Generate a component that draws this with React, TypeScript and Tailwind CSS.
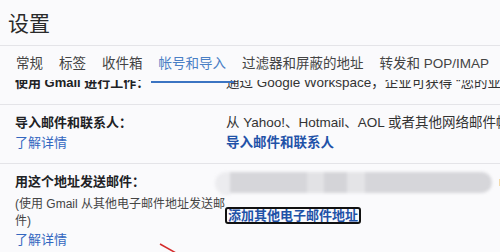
const tabs = ["常规", "标签", "收件箱", "帐号和导入", "过滤器和屏蔽的地址", "转发和 POP/IMAP"];
const active = "帐号和导入";

function Label({ children }: { children: React.ReactNode }) {
  return <div className="text-[13px] leading-[20px] font-bold text-[#202124]">{children}</div>;
}

function LearnMore() {
  return <div className="text-[13px] leading-[20px] text-[#3367c0]">了解详情</div>;
}

export default function App() {
  return (
    <div className="relative w-[500px] h-[252px] overflow-hidden bg-[#fafafc] font-['Liberation_Sans','Noto_Sans_CJK_SC',sans-serif] text-[#222]">
      <header className="relative z-10 bg-[#fafafc]">
        <div className="h-[46px] border-b border-[#e4e4e8] pl-[8px] pt-[10px]">
          <h1 className="text-[21px] leading-[28px] text-[#2a2a2a]">设置</h1>
        </div>
        <nav className="flex h-[34px] pl-[8px] whitespace-nowrap">
          {tabs.map((t) => (
            <div
              key={t}
              className={`relative px-[8px] pt-[8px] text-[13.5px] leading-[20px] ${t === active ? "text-[#4a7fc5]" : "text-[#444]"}`}
            >
              {t}
              {t === active && <span className="absolute left-0 right-0 -bottom-[3px] h-[2px] bg-[#3b74c2]" />}
            </div>
          ))}
        </nav>
      </header>

      <main className="h-[172px] overflow-hidden">
        <section className="flex px-[15px] -mt-[7px] pb-[11px] border-b border-[#e4e4e8]">
          <div className="w-[211px] shrink-0">
            <Label>使用 Gmail 进行工作：</Label>
          </div>
          <div className="whitespace-nowrap text-[13.5px] leading-[20px] text-[#333]">
            通过 Google Workspace，企业可获得 “您的业务” 专用的电子邮件地址
          </div>
        </section>

        <section className="flex px-[15px] pt-[8px] pb-[10px] border-b border-[#e4e4e8]">
          <div className="w-[211px] shrink-0">
            <Label>导入邮件和联系人：</Label>
            <LearnMore />
          </div>
          <div className="whitespace-nowrap text-[13.5px] leading-[20px]">
            <div className="text-[#333]">从 Yahoo!、Hotmail、AOL 或者其他网络邮件帐户导入。</div>
            <div className="font-bold text-[#1f52a8]">导入邮件和联系人</div>
          </div>
        </section>

        <section className="flex px-[15px] pt-[8px]">
          <div className="w-[211px] shrink-0">
            <Label>用这个地址发送邮件：</Label>
            <div className="mt-[3.5px] text-[12px] leading-[17px] text-[#444]">
              (使用 Gmail 从其他电子邮件地址发送邮件)
            </div>
            <LearnMore />
          </div>
          <div className="whitespace-nowrap">
            <div className="flex items-center h-[21px] -ml-[11px]">
              <div className="flex h-[21px] blur-[1.5px]">
                <div className="w-[15px] h-[23px] rounded-l-full bg-[#ececef]" />
                <div className="w-[77px] bg-[#d6d6da]" />
                <div className="w-[17px] bg-[#e2e2e5]" />
                <div className="w-[23px] bg-[#d4d4d8]" />
                <div className="w-[18px] bg-[#e4e4e7]" />
                <div className="w-[127px] rounded-r-full bg-[#d6d6da]" />
              </div>
              <span className="ml-[7px] text-[13.5px] text-[#333]">r</span>
            </div>
            <div className="mt-[10px] -ml-[1px]">
              <span className="inline-block rounded-[3px] border-2 border-[#111] px-[1px] text-[13px] leading-[13px] font-bold text-[#1f52a8]">
                添加其他电子邮件地址
              </span>
            </div>
          </div>
        </section>
      </main>

      <svg className="absolute left-[155px] top-[240px]" width="25" height="12" viewBox="0 0 25 12">
        <line x1="5" y1="4" x2="21" y2="13" stroke="#d42a2a" strokeWidth="1.5" />
      </svg>
    </div>
  );
}
